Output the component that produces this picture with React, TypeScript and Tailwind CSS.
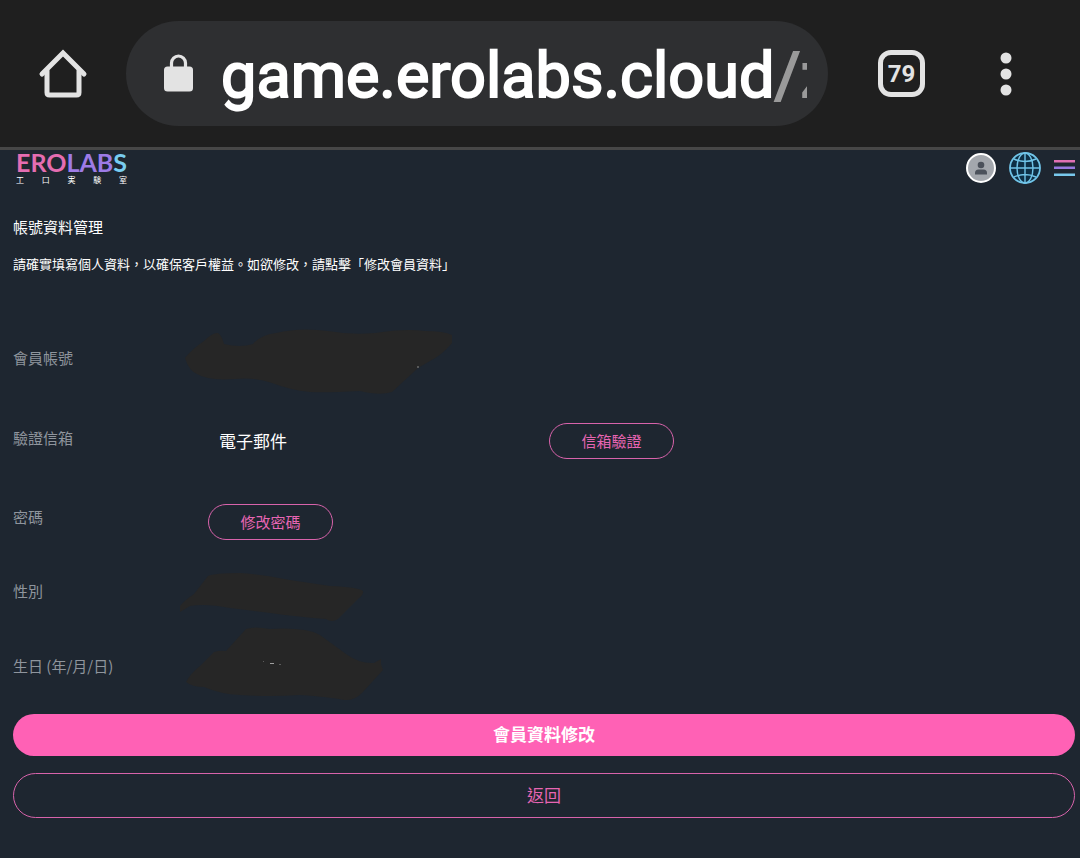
import React from 'react';

const LOGO_CAPTION = ['工', '口', '実', '験', '室'];

const BrowserBar: React.FC = () => (
  <header className="flex items-center h-[150px] bg-[#1f1f1f] border-b-3 border-[#474747]">
    <button type="button" aria-label="Home" className="w-[126px] flex justify-center">
      <svg width="50" height="50" viewBox="0 0 50 50" fill="none" stroke="#e3e3e3" strokeWidth="5" strokeLinecap="round" strokeLinejoin="round">
        <path d="M4 25 25 4 46 25" strokeLinejoin="miter" />
        <path d="M9 22V43.500Q9 46 11.500 46H38.500Q41 46 41 43.500V22" />
      </svg>
    </button>

    <div className="flex-1 min-w-0 h-[105px] rounded-full bg-[#2e2f31] flex items-center pl-[38px] pr-[21px]">
      <svg className="shrink-0" width="29" height="40" viewBox="0 0 29 40">
        <path d="M7.500 15V9a7 7 0 0 1 14 0v6" fill="none" stroke="#e3e3e3" strokeWidth="3.200" />
        <rect x="0" y="12.500" width="29" height="25" rx="3.500" fill="#e3e3e3" />
      </svg>
      <div className="ml-[28px] pt-1 flex-1 min-w-0 overflow-hidden whitespace-nowrap font-[Roboto,sans-serif] text-[63px] leading-[80px] text-white [-webkit-text-stroke:2px_#fff]">
        game.erolabs.cloud<span className="text-[#9a9a9a] [-webkit-text-stroke:2px_#9a9a9a]">/z</span>
      </div>
    </div>

    <div className="w-[252px] flex items-center pl-[50px]">
      <button type="button" aria-label="79 open tabs" className="w-[47px] h-[47px] rounded-[13px] border-5 border-[#e3e3e3] flex items-center justify-center font-[Roboto,sans-serif] font-bold text-[24px] leading-6 text-[#e3e3e3]">
        79
      </button>
      <button type="button" aria-label="More" className="ml-[75px]">
        <svg width="12" height="44" viewBox="0 0 12 44" fill="#e3e3e3">
          <circle cx="6" cy="6" r="5.500" />
          <circle cx="6" cy="22" r="5.500" />
          <circle cx="6" cy="38" r="5.500" />
        </svg>
      </button>
    </div>
  </header>
);

const SiteHeader: React.FC = () => (
  <div className="flex items-center justify-between h-9 pl-4 pr-[5px]">
    <a href="#" aria-label="EROLABS" className="w-[111px]">
      <div className="font-[Lato,sans-serif] font-bold text-[25px] leading-6 whitespace-nowrap text-[#e56db1]">
        ERO<span className="text-[#9d7be6]">LAB</span><span className="text-[#78cdf0]">S</span>
      </div>
      <div className="flex justify-between text-[8px] leading-[12px] text-white">
        {LOGO_CAPTION.map((char) => (
          <span key={char}>{char}</span>
        ))}
      </div>
    </a>

    <div className="flex items-center">
      <button type="button" aria-label="Account">
        <svg width="30" height="30" viewBox="0 0 30 30">
          <circle cx="15" cy="15" r="14" fill="#a3a7ad" stroke="#fff" strokeWidth="2" />
          <circle cx="15" cy="12" r="3.300" fill="#4b515b" />
          <path d="M9 21.500V20q0-3.500 3.500-3.500h5q3.500 0 3.500 3.500v1.500z" fill="#4b515b" />
        </svg>
      </button>
      <button type="button" aria-label="Language" className="ml-[13px]">
        <svg width="32" height="32" viewBox="0 0 32 32" fill="none" stroke="#70c4e8" strokeWidth="1.400">
          <circle cx="16" cy="16" r="15" fill="#0e2f45" strokeWidth="1.800" />
          <ellipse cx="16" cy="16" rx="8" ry="15" />
          <path d="M16 1v30M1 16h30M5 7q11 5 22 0M5 25q11-5 22 0" />
        </svg>
      </button>
      <button type="button" aria-label="Menu" className="ml-[13px]">
        <svg width="21" height="18" viewBox="0 0 21 18">
          <rect y="1" width="21" height="2.500" fill="#e070b4" />
          <rect y="7.500" width="21" height="2.500" fill="#9878e0" />
          <rect y="14.500" width="21" height="2.500" fill="#78c8ec" />
        </svg>
      </button>
    </div>
  </div>
);

const Label: React.FC<{ children: React.ReactNode }> = ({ children }) => (
  <dt className="w-[195px] shrink-0 pb-0.5 text-[15px] leading-6 text-[#8f959d]">{children}</dt>
);

const OutlineButton: React.FC<{ children: React.ReactNode }> = ({ children }) => (
  <button type="button" className="w-[125px] h-9 rounded-full border border-[#d863ab] text-[15px] leading-6 text-[#e765b3]">
    {children}
  </button>
);

const App: React.FC = () => {
  return (
    <div className="min-h-screen bg-[#1e2630] font-['Noto_Sans_CJK_TC',sans-serif]">
      <BrowserBar />
      <SiteHeader />

      <main className="pl-[13px] pr-[5px] pt-[29px] pb-10">
        <h1 className="text-[15px] leading-6 text-white">帳號資料管理</h1>
        <p className="mt-[15px] text-[13px] leading-5 text-white">
          請確實填寫個人資料，以確保客戶權益。如欲修改，請點擊「修改會員資料」
        </p>

        <dl className="mt-[45px]">
          <div className="flex items-center h-20">
            <Label>會員帳號</Label>
            <dd className="-ml-7">
              <svg width="280" height="80" viewBox="0 0 280 80" fill="#262626">
                <path d="M5 39Q12 30 24 22Q33 13 38 14Q42 17 44 25Q60 29 73 25Q80 16 96 14Q120 8 148 12Q170 16 195 14Q225 9 245 12Q264 12 272 16V24Q262 36 250 42L238 49L212 73Q200 77 180 72Q145 74 130 73Q110 71 92 64Q75 58 55 60Q28 62 17 55Q9 52 5 39z" />
                <circle cx="238" cy="48" r="0.800" fill="#9a9a9a" />
              </svg>
            </dd>
          </div>

          <div className="flex items-center h-20">
            <Label>驗證信箱</Label>
            <dd className="flex items-center pt-1">
              <span className="w-[341px] pl-[11px] text-[17px] leading-6 text-white">電子郵件</span>
              <OutlineButton>信箱驗證</OutlineButton>
            </dd>
          </div>

          <div className="flex items-center h-[78px]">
            <Label>密碼</Label>
            <dd className="pt-2">
              <OutlineButton>修改密碼</OutlineButton>
            </dd>
          </div>

          <div className="flex items-center h-[70px]">
            <Label>性別</Label>
            <dd className="-ml-7">
              <svg width="210" height="70" viewBox="0 0 210 70" fill="#262626">
                <path d="M-2 52Q2 45 14 37L28 19Q34 16 60 16Q80 17 110 23L150 29Q178 30 183 34Q184 37 178 42L158 62Q152 66 146 62Q120 60 90 56L50 51Q25 46 10 49L0 55z" />
              </svg>
            </dd>
          </div>

          <div className="flex items-center h-20">
            <Label>生日 (年/月/日)</Label>
            <dd className="-ml-7">
              <svg width="210" height="80" viewBox="0 0 210 80" fill="#262626">
                <path d="M6 55Q10 47 20 39L34 25Q40 23 46 24L66 2Q74-1 90 2Q125 0 140 8L166 27Q180 37 194 36L201 32V37L203 43L182 66Q174 74 164 73Q150 70 120 68Q90 70 60 68Q40 67 24 60Q12 60 6 55z" />
                <path d="M90 36.500h4" stroke="#a0a0a0" />
                <path d="M83 34.500h1M99 37.500h2" stroke="#5c5c5c" />
              </svg>
            </dd>
          </div>
        </dl>

        <button type="button" className="mt-[7px] block w-full h-[42px] pb-0.5 rounded-full bg-[#ff61b5] text-[17px] leading-6 font-bold text-white">
          會員資料修改
        </button>
        <button type="button" className="mt-[17px] block w-full h-[45px] pb-0.5 rounded-full border border-[#d863ab] text-[17px] leading-6 text-[#e765b3]">
          返回
        </button>
      </main>
    </div>
  );
};

export default App;
